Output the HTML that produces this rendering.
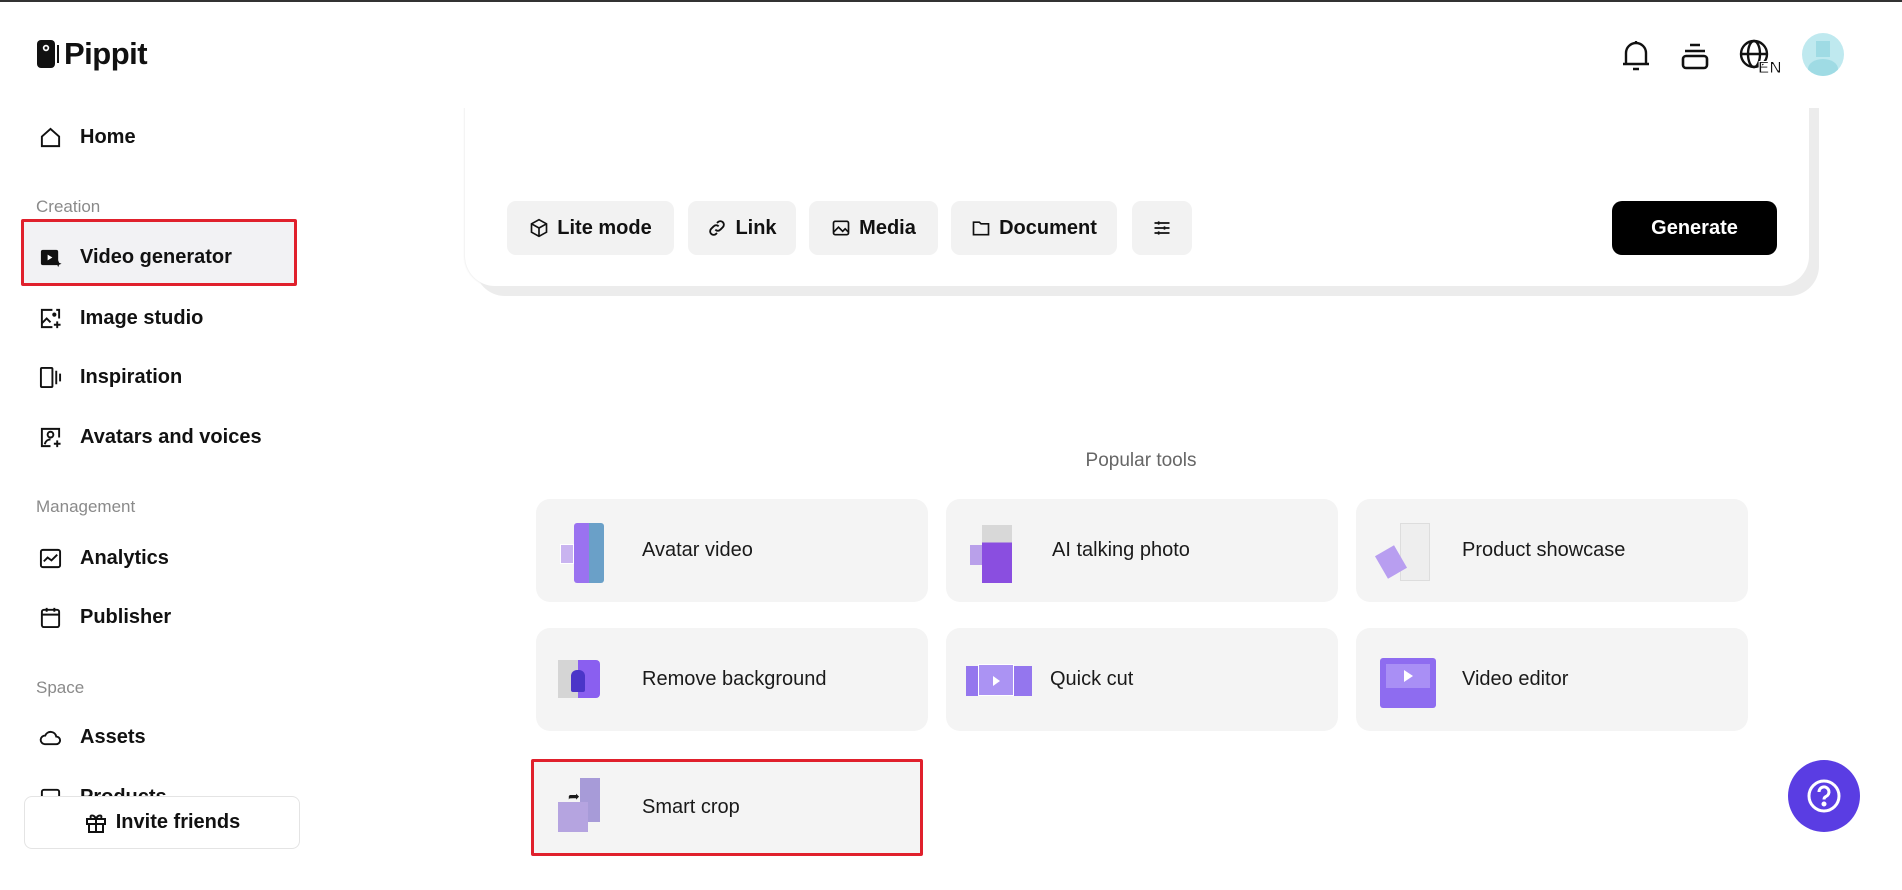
<!DOCTYPE html>
<html><head><meta charset="utf-8"><style>
*{box-sizing:border-box;margin:0;padding:0}
body{width:1902px;height:890px;overflow:hidden;background:#fff;font-family:"Liberation Sans",sans-serif;color:#111;position:relative}
.abs{position:absolute}
.topline{left:0;top:0;width:1902px;height:2px;background:#333;z-index:5}
.header{left:0;top:0;width:1902px;height:108px;background:#fff;z-index:3}
.logo{left:36px;top:36px;font-size:31px;font-weight:700;display:flex;align-items:center;gap:4px;letter-spacing:-0.5px;z-index:4}
.nav{left:39px;display:flex;align-items:center;font-size:20px;font-weight:600;height:30px;gap:18px}
.nav svg{width:23px;height:23px}
.sec{left:36px;font-size:17px;color:#8a8a8a}
.hl{left:21px;top:219px;width:276px;height:67px;background:#f2f2f4;border:3px solid #e0202c;border-radius:2px}
.invite{left:24px;top:796px;width:276px;height:53px;border:1px solid #e4e4e4;border-radius:8px;background:#fff;display:flex;align-items:center;justify-content:center;gap:8px;font-size:20px;font-weight:600}
.card{left:465px;top:20px;width:1344px;height:266px;background:#fff;border-radius:30px;box-shadow:10px 10px 0 #ececec, 0 0 2px #ddd}
.btn{top:201px;height:54px;background:#f2f2f2;border-radius:9px;display:flex;align-items:center;justify-content:center;gap:8px;font-size:20px;font-weight:600}
.btn svg{width:20px;height:20px}
.gen{left:1612px;top:201px;width:165px;height:54px;background:#000;color:#fff;border-radius:10px;display:flex;align-items:center;justify-content:center;font-size:20px;font-weight:600}
.pt{left:0;top:450px;text-align:center;font-size:19px;color:#666}
.tool{background:#f4f4f4;border-radius:14px;height:103px;display:flex;align-items:center;font-size:20px;font-weight:500;color:#1a1a1a}
.th{width:60px;height:60px;margin-left:22px;margin-right:24px;position:relative}
.help{left:1788px;top:760px;width:72px;height:72px;border-radius:50%;background:#5a3de3;display:flex;align-items:center;justify-content:center}
.hi{z-index:4}
</style></head><body>
<div class="abs topline"></div>
<div class="abs card"></div>
<div class="abs header"></div>
<div class="abs logo"><svg width="24" height="30" viewBox="0 0 24 30"><rect x="1" y="1" width="18" height="28" rx="4" fill="#111"/><circle cx="10" cy="9" r="3.2" fill="#fff"/><circle cx="10" cy="9" r="1.5" fill="#111"/><rect x="21" y="6" width="2" height="18" fill="#111"/></svg><span>Pippit</span></div>

<div class="abs nav" style="top:122px"><svg viewBox="0 0 24 24" fill="none" stroke="#111" stroke-width="2"><path d="M3 11L12 3l9 8v10H3z"/></svg>Home</div>
<div class="abs sec" style="top:197px">Creation</div>
<div class="abs hl"></div>
<div class="abs nav" style="top:242px"><svg viewBox="0 0 24 24"><rect x="2" y="4" width="18" height="16" rx="2" fill="#111"/><path d="M9 9l5 3-5 3z" fill="#fff"/><path d="M20 15l1 2.5 2.5 1-2.5 1-1 2.5-1-2.5-2.5-1 2.5-1z" fill="#111"/></svg>Video generator</div>
<div class="abs nav" style="top:303px"><svg viewBox="0 0 24 24" fill="none" stroke="#111" stroke-width="2"><path d="M14 3H3v18h11M21 12V3h-3"/><path d="M3 17l5-5 4 4"/><circle cx="16" cy="8" r="1.2" fill="#111"/><path d="M19 15v7M15.5 18.5h7"/></svg>Image studio</div>
<div class="abs nav" style="top:362px"><svg viewBox="0 0 24 24" fill="none" stroke="#111" stroke-width="2"><rect x="2" y="2" width="12" height="20" rx="1"/><path d="M18 5v14M22 8v8"/></svg>Inspiration</div>
<div class="abs nav" style="top:422px"><svg viewBox="0 0 24 24" fill="none" stroke="#111" stroke-width="2"><path d="M12 21H3V3h18v9"/><circle cx="12" cy="9" r="3"/><path d="M6 19c1-4 4-5 6-5"/><path d="M19 15v7M15.5 18.5h7"/></svg>Avatars and voices</div>
<div class="abs sec" style="top:497px">Management</div>
<div class="abs nav" style="top:543px"><svg viewBox="0 0 24 24" fill="none" stroke="#111" stroke-width="2"><rect x="2" y="3" width="20" height="18" rx="2"/><path d="M5 15l4-4 4 3 6-6"/></svg>Analytics</div>
<div class="abs nav" style="top:602px"><svg viewBox="0 0 24 24" fill="none" stroke="#111" stroke-width="2"><rect x="3" y="4" width="18" height="18" rx="2"/><path d="M3 9h18M8 2v4M16 2v4"/></svg>Publisher</div>
<div class="abs sec" style="top:678px">Space</div>
<div class="abs nav" style="top:722px"><svg viewBox="0 0 24 24" fill="none" stroke="#111" stroke-width="2"><path d="M6 19h12a4 4 0 000-8 6 6 0 00-11.5-1A4.5 4.5 0 006 19z"/></svg>Assets</div>
<div class="abs nav" style="top:782px"><svg viewBox="0 0 24 24" fill="none" stroke="#111" stroke-width="2"><rect x="3" y="4" width="18" height="16" rx="2"/></svg>Products</div>
<div class="abs invite"><svg width="24" height="24" viewBox="0 0 24 24" fill="none" stroke="#111" stroke-width="2"><rect x="3" y="8" width="18" height="5"/><path d="M5 13v8h14v-8M12 8v13M12 8c-2-5-7-4-5-1M12 8c2-5 7-4 5-1"/></svg>Invite friends</div>

<svg class="abs hi" style="left:1620px;top:38px" width="32" height="34" viewBox="0 0 32 34" fill="none" stroke="#111" stroke-width="2.4"><path d="M6 26V15a10 10 0 0120 0v11zM3 26h26M13 31h6M16 3v2"/></svg>
<svg class="abs hi" style="left:1680px;top:42px" width="30" height="30" viewBox="0 0 30 30" fill="none" stroke="#111" stroke-width="2.6"><path d="M10 3h10M5 9h20"/><rect x="3" y="14" width="24" height="12" rx="3"/></svg>
<svg class="abs hi" style="left:1738px;top:38px" width="46" height="38" viewBox="0 0 46 38" fill="none" stroke="#111" stroke-width="2.4"><circle cx="16" cy="16" r="13"/><ellipse cx="16" cy="16" rx="6" ry="13"/><path d="M3 16h26"/><text x="20" y="35" font-family="Liberation Sans" font-size="17" font-weight="700" fill="#111" stroke="#fff" stroke-width="1">EN</text></svg>
<div class="abs hi" style="left:1802px;top:33px;width:42px;height:43px;border-radius:50%;background:#bfe9ef;overflow:hidden"><div style="position:absolute;left:14px;top:8px;width:14px;height:16px;background:#9fdbe4"></div><div style="position:absolute;left:6px;top:26px;width:30px;height:20px;border-radius:50%;background:#9fdbe4"></div></div>

<div class="abs btn" style="left:507px;width:167px"><svg viewBox="0 0 24 24" fill="none" stroke="#111" stroke-width="2"><path d="M12 2l9 5v10l-9 5-9-5V7zM3 7l9 5 9-5M12 12v10"/></svg>Lite mode</div>
<div class="abs btn" style="left:688px;width:108px"><svg viewBox="0 0 24 24" fill="none" stroke="#111" stroke-width="2.2"><path d="M10 14a4 4 0 006 0l3-3a4 4 0 00-6-6l-1 1M14 10a4 4 0 00-6 0l-3 3a4 4 0 006 6l1-1"/></svg>Link</div>
<div class="abs btn" style="left:809px;width:129px"><svg viewBox="0 0 24 24" fill="none" stroke="#111" stroke-width="2"><rect x="3" y="4" width="18" height="16" rx="2"/><path d="M3 17l6-6 5 5 3-3 4 4"/></svg>Media</div>
<div class="abs btn" style="left:951px;width:166px"><svg viewBox="0 0 24 24" fill="none" stroke="#111" stroke-width="2"><path d="M3 5h7l2 2h9v13H3z"/></svg>Document</div>
<div class="abs btn" style="left:1132px;width:60px"><svg viewBox="0 0 24 24" fill="none" stroke="#111" stroke-width="2"><path d="M3 6h18M3 12h18M3 18h18M8 4v4M15 10v4M8 16v4"/></svg></div>
<div class="abs gen">Generate</div>

<div class="abs pt" style="width:2282px">Popular tools</div>

<div class="abs tool" style="left:536px;top:499px;width:392px"><div class="th"><div class="abs" style="left:16px;top:2px;width:30px;height:60px;background:linear-gradient(90deg,#9a72f0 50%,#6aa0c8 50%);border-radius:3px"></div><div class="abs" style="left:2px;top:23px;width:14px;height:20px;background:#c9b4f0;border:1px solid #fff"></div></div>Avatar video</div>
<div class="abs tool" style="left:946px;top:499px;width:392px"><div class="th"><div class="abs" style="left:14px;top:4px;width:30px;height:58px;background:linear-gradient(#d8d8d8 30%,#8a4ee0 30%)"></div><div class="abs" style="left:2px;top:24px;width:12px;height:20px;background:#b9a0ea"></div></div>AI talking photo</div>
<div class="abs tool" style="left:1356px;top:499px;width:392px"><div class="th"><div class="abs" style="left:22px;top:2px;width:30px;height:58px;background:#eee;border:1px solid #ddd"></div><div class="abs" style="left:2px;top:28px;width:22px;height:26px;background:#b89ef0;transform:rotate(-30deg)"></div></div>Product showcase</div>
<div class="abs tool" style="left:536px;top:628px;width:392px"><div class="th"><div class="abs" style="left:0;top:10px;width:20px;height:38px;background:#d5d5d5"></div><div class="abs" style="left:20px;top:10px;width:22px;height:38px;background:#8a5ff0;border-radius:0 4px 4px 0"></div><div class="abs" style="left:13px;top:20px;width:14px;height:22px;background:#4b35c8;border-radius:6px 6px 2px 2px"></div></div>Remove background</div>
<div class="abs tool" style="left:946px;top:628px;width:392px"><div class="th" style="width:70px;margin-left:20px;margin-right:14px"><div class="abs" style="left:0;top:16px;width:66px;height:30px;background:#9476ee"></div><div class="abs" style="left:12px;top:14px;width:36px;height:32px;background:#ab93f3;border:1px solid #fff"></div><div class="abs" style="left:27px;top:26px;width:0;height:0;border-left:7px solid #fff;border-top:5px solid transparent;border-bottom:5px solid transparent"></div></div>Quick cut</div>
<div class="abs tool" style="left:1356px;top:628px;width:392px"><div class="th"><div class="abs" style="left:2px;top:8px;width:56px;height:50px;background:#8e6cf0;border-radius:3px"></div><div class="abs" style="left:8px;top:14px;width:44px;height:24px;background:#a98ff5"></div><div class="abs" style="left:26px;top:20px;width:0;height:0;border-left:9px solid #fff;border-top:6px solid transparent;border-bottom:6px solid transparent"></div></div>Video editor</div>
<div class="abs tool" style="left:531px;top:759px;width:392px;height:97px;border:3px solid #e0202c;border-radius:2px"><div class="th" style="margin-left:24px"><div class="abs" style="left:22px;top:0;width:20px;height:44px;background:#a79bd8"></div><div class="abs" style="left:0;top:24px;width:30px;height:30px;background:#b5a4e0"></div><div class="abs" style="left:10px;top:10px;font-size:14px">➦</div></div>Smart crop</div>

<div class="abs help"><svg width="40" height="40" viewBox="0 0 40 40" fill="none" stroke="#fff" stroke-width="3"><circle cx="20" cy="20" r="15"/><path d="M15 16a5 5 0 1 1 7 4.5c-1.5.7-2 1.5-2 3"/><circle cx="20" cy="28" r="1" fill="#fff"/></svg></div>
</body></html>
